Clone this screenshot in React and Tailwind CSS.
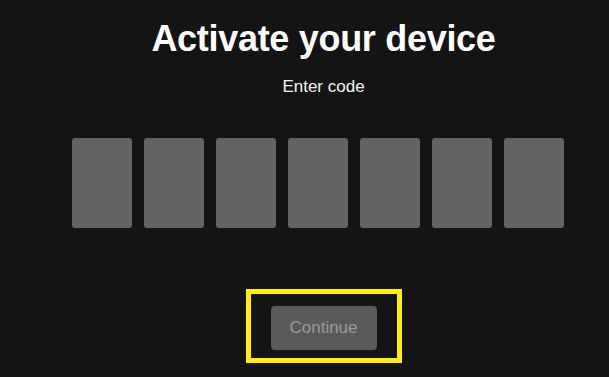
import React from 'react';

const ActivateDevice = () => {
  const slots = [0, 1, 2, 3, 4, 5, 6];

  return (
    <div
      className="w-full h-[377px] bg-[#141414] flex flex-col items-center overflow-hidden"
      style={{ fontFamily: "'Liberation Sans', Arial, sans-serif" }}
    >
      <div className="pl-[38px] pt-[19px] flex flex-col items-center">
        <h1 className="text-[36px] leading-[40px] font-bold text-white tracking-[-0.3px]">
          Activate your device
        </h1>
        <p className="mt-[18px] text-[17px] leading-[20px] text-[#f2f2f2]">Enter code</p>
      </div>

      <div className="mt-[41px] mr-[-27px] flex gap-[12px]">
        {slots.map((i) => (
          <div key={i} className="w-[60px] h-[90px] rounded-[3px] bg-[#636363]" />
        ))}
      </div>

      <div className="mt-[61px] ml-[38px] border-[5px] border-[#fff100] px-[20px] pt-[12px] pb-[8px]">
        <button className="w-[106px] h-[44px] rounded-[4px] bg-[#5a5a5a] text-[#9a9a9a] text-[17px]">
          Continue
        </button>
      </div>
    </div>
  );
};

export default function App() {
  return <ActivateDevice />;
}
